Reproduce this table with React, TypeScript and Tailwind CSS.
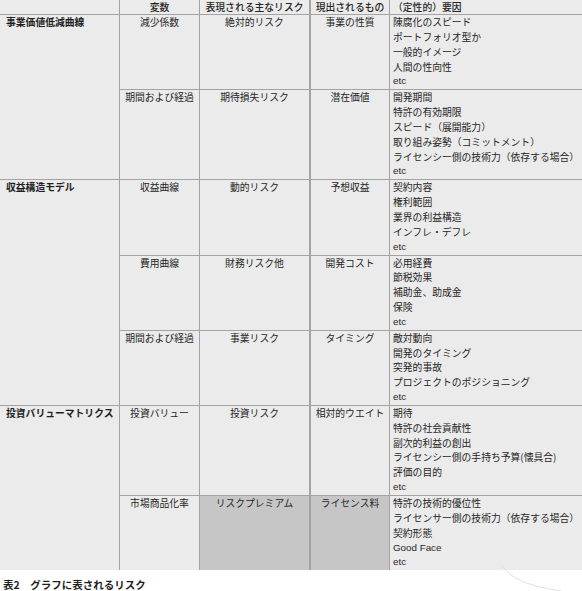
import React from "react";

type Row = { v: string; r: string; a: string; f: string[]; shaded?: boolean };
type Group = { name: string; rows: Row[] };

const groups: Group[] = [
  {
    name: "事業価値低減曲線",
    rows: [
      { v: "減少係数", r: "絶対的リスク", a: "事業の性質", f: ["陳腐化のスピード", "ポートフォリオ型か", "一般的イメージ", "人間の性向性", "etc"] },
      { v: "期間および経過", r: "期待損失リスク", a: "潜在価値", f: ["開発期間", "特許の有効期限", "スピード（展開能力）", "取り組み姿勢（コミットメント）", "ライセンシー側の技術力（依存する場合）", "etc"] },
    ],
  },
  {
    name: "収益構造モデル",
    rows: [
      { v: "収益曲線", r: "動的リスク", a: "予想収益", f: ["契約内容", "権利範囲", "業界の利益構造", "インフレ・デフレ", "etc"] },
      { v: "費用曲線", r: "財務リスク他", a: "開発コスト", f: ["必用経費", "節税効果", "補助金、助成金", "保険", "etc"] },
      { v: "期間および経過", r: "事業リスク", a: "タイミング", f: ["敵対動向", "開発のタイミング", "突発的事故", "プロジェクトのポジショニング", "etc"] },
    ],
  },
  {
    name: "投資バリューマトリクス",
    rows: [
      { v: "投資バリュー", r: "投資リスク", a: "相対的ウエイト", f: ["期待", "特許の社会貢献性", "副次的利益の創出", "ライセンシー側の手持ち予算(懐具合)", "評価の目的", "etc"] },
      { v: "市場商品化率", r: "リスクプレミアム", a: "ライセンス料", f: ["特許の技術的優位性", "ライセンサー側の技術力（依存する場合）", "契約形態", "Good Face", "etc"], shaded: true },
    ],
  },
];

const font = { fontFamily: '"Noto Sans CJK JP", "Noto Sans", sans-serif' };
const latin = { fontFamily: '"Liberation Sans", "Noto Sans CJK JP", sans-serif' };

function Line({ text }: { text: string }) {
  const isLatin = /^[A-Za-z ]+$/.test(text);
  return (
    <div
      className={isLatin ? "h-[14.85px] text-[9.8px] leading-[14.85px]" : "h-[14.85px] whitespace-nowrap"}
      style={isLatin ? latin : undefined}
    >
      {text}
    </div>
  );
}

export default function App() {
  return (
    <div className="relative w-[582px] h-[591px] bg-white overflow-hidden text-[#262626] text-[9.8px] leading-[14.85px]" style={font}>
      <div className="bg-[#ebebeb]">
        <div className="flex h-[15px] border-b border-[#a3a3a3]">
          <div className="w-[120px] border-r border-[#a3a3a3]" />
          <div className="w-[80px] border-r border-[#a3a3a3] text-center leading-[14px] font-medium">変数</div>
          <div className="w-[111px] border-r-2 border-[#a3a3a3] text-center leading-[14px] font-medium">表現される主なリスク</div>
          <div className="w-[79px] border-r border-[#a3a3a3] text-center leading-[14px] font-medium">現出されるもの</div>
          <div className="flex-1 pl-[3px] leading-[14px] font-medium">（定性的）要因</div>
        </div>
        {groups.map((g, gi) => (
          <div key={gi} className={gi > 0 ? "flex border-t border-[#a3a3a3]" : "flex"}>
            <div className="w-[120px] border-r border-[#a3a3a3] pl-[6px] font-bold whitespace-nowrap text-[#1f1f1f]">{g.name}</div>
            <div className="flex flex-col flex-1">
              {g.rows.map((r, ri) => (
                <div key={ri} className={ri > 0 ? "flex border-t border-[#a3a3a3]" : "flex"}>
                  <div className="w-[80px] border-r border-[#a3a3a3] text-center whitespace-nowrap">{r.v}</div>
                  <div className={r.shaded ? "w-[111px] border-r-2 border-[#a3a3a3] text-center bg-[#c6c6c6]" : "w-[111px] border-r-2 border-[#a3a3a3] text-center"}>{r.r}</div>
                  <div className={r.shaded ? "w-[79px] border-r border-[#a3a3a3] text-center bg-[#c6c6c6] whitespace-nowrap" : "w-[79px] border-r border-[#a3a3a3] text-center whitespace-nowrap"}>{r.a}</div>
                  <div className="flex-1 pl-[3px]">
                    {r.f.map((t, ti) => (
                      <Line key={ti} text={t} />
                    ))}
                  </div>
                </div>
              ))}
            </div>
          </div>
        ))}
      </div>
      <div className="pl-[3px] pt-[8px] text-[10.5px] leading-[14px] font-bold text-[#1f1f1f]">表2　グラフに表されるリスク</div>
      <svg className="absolute left-[500px] top-[566px]" width="82" height="25" viewBox="0 0 82 25">
        <path d="M2 0 C 10 12, 30 21, 62 25" stroke="#e0e0e0" strokeWidth="1" fill="none" />
      </svg>
    </div>
  );
}
